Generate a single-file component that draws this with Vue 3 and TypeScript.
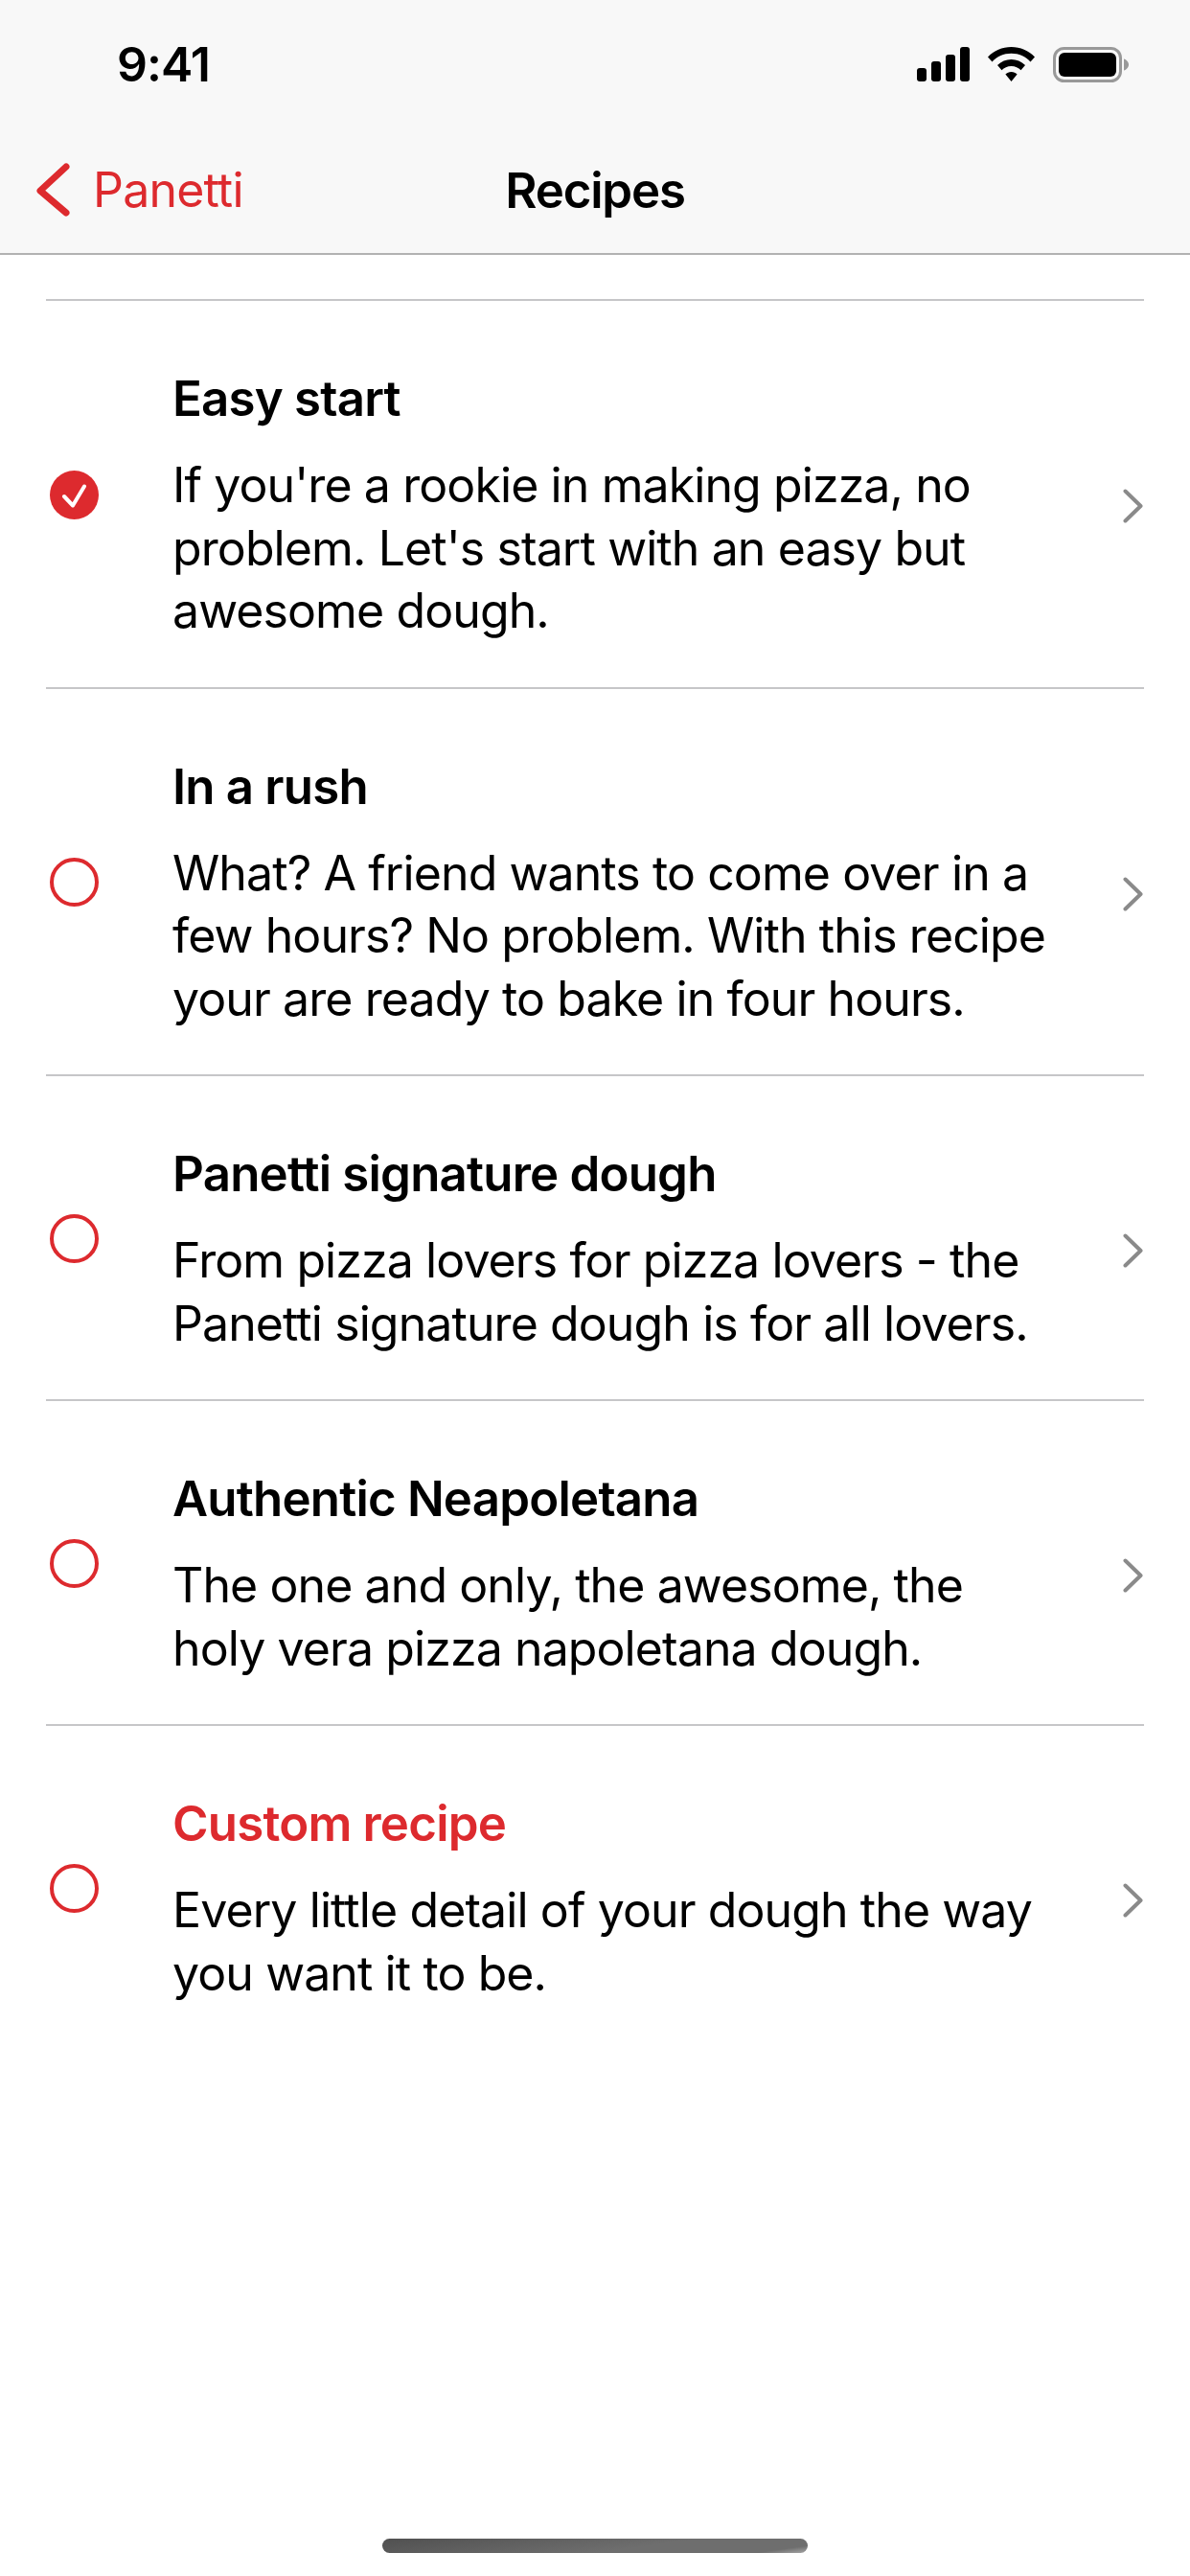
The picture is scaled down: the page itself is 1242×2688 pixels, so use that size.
<script setup lang="ts">
interface Recipe {
  title: string
  body: string
  selected?: boolean
  custom?: boolean
}

const recipes: Recipe[] = [
  {
    title: 'Easy start',
    body: "If you're a rookie in making pizza, no problem. Let's start with an easy but awesome dough.",
    selected: true,
  },
  {
    title: 'In a rush',
    body: 'What? A friend wants to come over in a few hours? No problem. With this recipe your are ready to bake in four hours.',
  },
  {
    title: 'Panetti signature dough',
    body: 'From pizza lovers for pizza lovers - the Panetti signature dough is for all lovers.',
  },
  {
    title: 'Authentic Neapoletana',
    body: 'The one and only, the awesome, the holy vera pizza napoletana dough.',
  },
  {
    title: 'Custom recipe',
    body: 'Every little detail of your dough the way you want it to be.',
    custom: true,
  },
]
</script>

<template>
  <div class="page">
    <header class="top-bar">
      <div class="status-bar">
        <span class="status-bar__time">9:41</span>
        <div class="status-bar__icons">
          <svg width="55" height="36" viewBox="0 0 55 36">
            <rect x="0" y="22" width="10" height="14" rx="3" />
            <rect x="15" y="15" width="10" height="21" rx="3" />
            <rect x="30" y="8" width="10" height="28" rx="3" />
            <rect x="45" y="0" width="10" height="36" rx="3" />
          </svg>
          <svg width="49" height="36" viewBox="0 0 49 36">
            <path d="M24.5 0C34 0 42.500 3.800 49 10.500L44.500 15.500C39.500 10 32.500 6.800 24.500 6.800C16.500 6.800 9.500 10 4.500 15.500L0 10.500C6.500 3.800 15 0 24.500 0Z" />
            <path d="M24.500 13C30 13 35 15.300 39 19L34.500 24.200C32 21.700 28.500 20 24.500 20C20.500 20 17 21.700 14.500 24.200L10 19C14 15.300 19 13 24.500 13Z" />
            <path d="M24.500 26C27 26 29 26.900 30.600 28.400L24.500 36L18.400 28.400C20 26.900 22 26 24.500 26Z" />
          </svg>
          <svg width="79" height="37" viewBox="0 0 79 37">
            <rect x="1.500" y="1.500" width="69" height="34" rx="10" fill="none" stroke="#999" stroke-width="3" />
            <rect x="6" y="6" width="60" height="25" rx="6" />
            <path d="M74 12.500C76.500 13.200 79 15.500 79 18.500C79 21.500 76.500 23.800 74 24.500Z" fill="#999" />
          </svg>
        </div>
      </div>
      <nav class="nav-bar">
        <div class="nav-bar__back">
          <svg width="35" height="56" viewBox="0 0 35 56">
            <path d="M31 4L4 29L31 52" fill="none" stroke="#dd2a2e" stroke-width="7" stroke-linecap="round" stroke-linejoin="round" />
          </svg>
          <span>Panetti</span>
        </div>
        <h1 class="nav-bar__title">Recipes</h1>
        <div></div>
      </nav>
    </header>

    <main class="list">
      <div v-for="recipe in recipes" :key="recipe.title" class="row">
        <svg v-if="recipe.selected" class="radio" width="51" height="51" viewBox="0 0 51 51">
          <circle cx="25.500" cy="25.500" r="25.500" fill="#dd2a2e" />
          <path d="M15 27L24 36.500L36 16.500" fill="none" stroke="#fff" stroke-width="4" stroke-linecap="round" stroke-linejoin="round" />
        </svg>
        <svg v-else class="radio" width="51" height="51" viewBox="0 0 51 51">
          <circle cx="25.500" cy="25.500" r="23.500" fill="none" stroke="#dd2a2e" stroke-width="4" />
        </svg>

        <div class="row__text">
          <h2 class="row__title" :class="{ 'row__title--custom': recipe.custom }">{{ recipe.title }}</h2>
          <p class="row__body">{{ recipe.body }}</p>
        </div>

        <svg class="chevron" width="22" height="36" viewBox="0 0 22 36">
          <path d="M2.500 2.500L18.500 18L2.500 33.500" fill="none" stroke="#8a8a8a" stroke-width="4" stroke-linecap="round" stroke-linejoin="round" />
        </svg>
      </div>
    </main>

    <div class="home-indicator"></div>
  </div>
</template>

<style>
html,
body {
  margin: 0;
  background: #fff;
}
</style>

<style scoped>
.page {
  width: 1242px;
  height: 2688px;
  overflow: hidden;
  display: flex;
  flex-direction: column;
  background: #fff;
  color: #000;
  font-family: Inter, "Liberation Sans", sans-serif;
}

.top-bar {
  height: 264px;
  flex: none;
  background: #f8f8f8;
  border-bottom: 2px solid #b2b2b2;
}

.status-bar {
  height: 132px;
  padding: 2px 64px 0 122px;
  box-sizing: border-box;
  display: flex;
  align-items: center;
  justify-content: space-between;
}

.status-bar__time {
  font-size: 50px;
  font-weight: 600;
  letter-spacing: -1px;
}

.status-bar__icons {
  display: flex;
  align-items: center;
  gap: 19px;
}

.nav-bar {
  height: 132px;
  display: grid;
  grid-template-columns: 1fr auto 1fr;
  align-items: center;
}

.nav-bar__back {
  padding-left: 38px;
  display: flex;
  align-items: center;
  gap: 24px;
  color: #dd2a2e;
  font-size: 50px;
  letter-spacing: -0.8px;
}

.nav-bar__title {
  margin: 0;
  font-size: 51px;
  font-weight: 600;
  letter-spacing: -1.2px;
}

.list {
  margin: 46px 48px 0;
  border-top: 2px solid #c6c6c8;
}

.row {
  padding-left: 4px;
  display: flex;
  align-items: center;
  border-bottom: 2px solid #c6c6c8;
}

.row:last-child {
  border-bottom: none;
}

.radio {
  flex: none;
  margin-top: 2px;
}

.row__text {
  width: 915px;
  margin-left: 77px;
  padding: 69px 0 46px;
  flex: none;
}

.row__title {
  margin: 0 0 25px;
  font-size: 51px;
  line-height: 66px;
  font-weight: 600;
  letter-spacing: -0.8px;
}

.row__title--custom {
  color: #dd2a2e;
}

.row__body {
  margin: 0;
  font-size: 50px;
  line-height: 65.500px;
  letter-spacing: -0.9px;
}

.chevron {
  flex: none;
  margin-left: auto;
  margin-top: 26px;
}

.home-indicator {
  width: 444px;
  height: 15px;
  margin: auto auto 24px;
  flex: none;
  border-radius: 8px;
  background: linear-gradient(172deg, #505050 0%, #6e6e6e 60%, #6e6e6e 90%, #a8a8a8 100%);
}
</style>
